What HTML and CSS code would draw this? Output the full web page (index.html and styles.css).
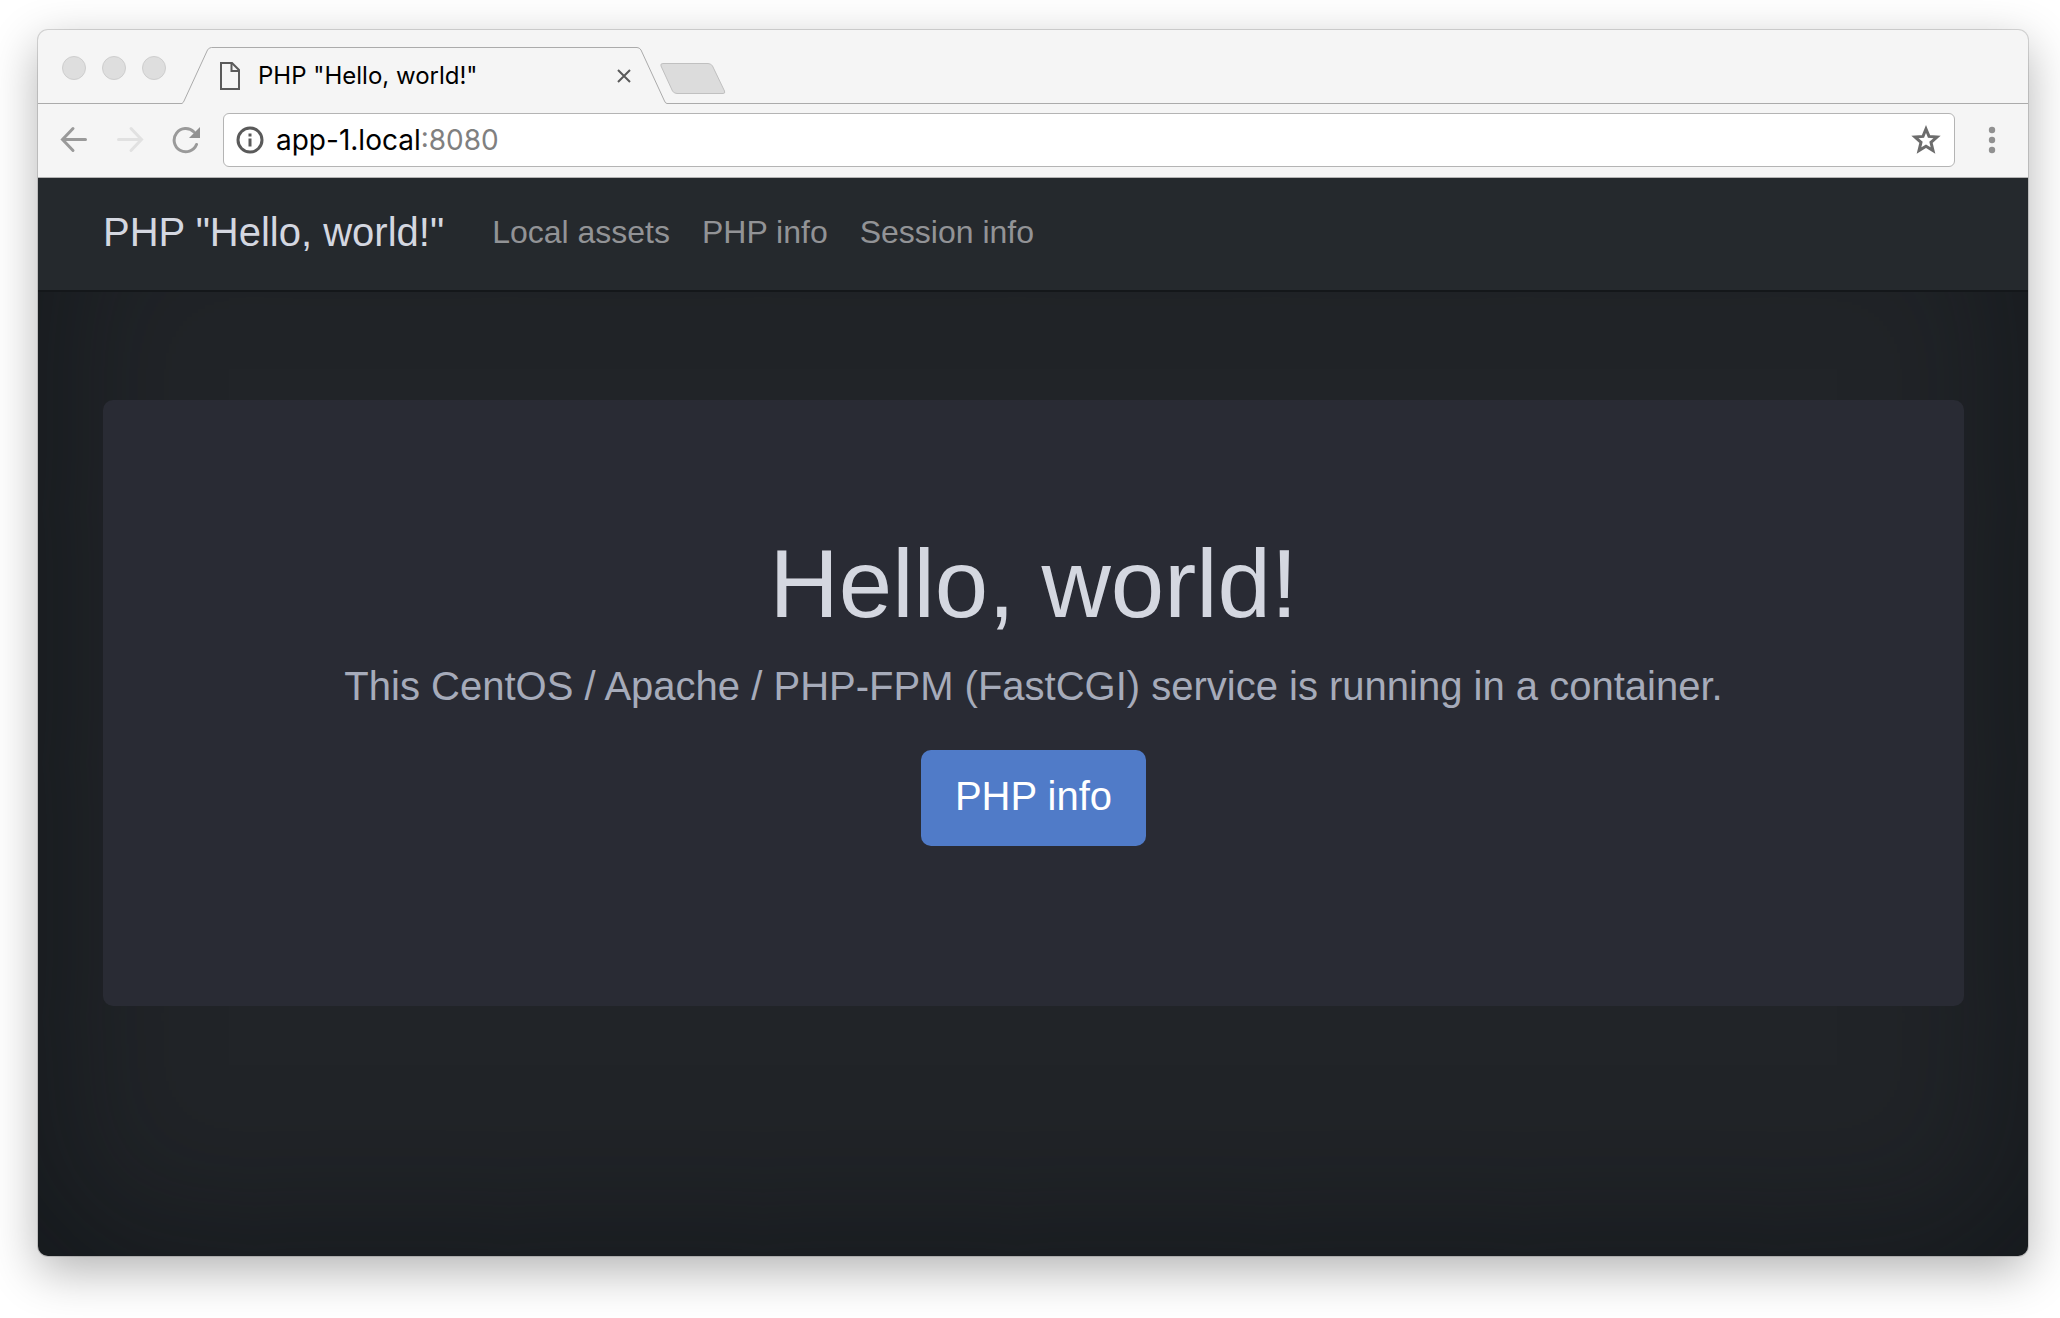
FILE: index.html
```html
<!DOCTYPE html>
<html lang="en">
<head>
  <meta charset="utf-8">
  <title>PHP "Hello, world!"</title>
  <link rel="stylesheet" href="styles.css">
</head>
<body>
  <div class="window">
    <header class="tab-strip">
      <div class="lights"><span class="light"></span><span class="light"></span><span class="light"></span></div>
      <div class="tab">
        <svg class="tab-shape" viewBox="0 0 485 57" aria-hidden="true"><path d="M0 56.5C1 56 1.500 55 2 54L25.500 3Q27 .5 29.500 .5H455Q457.500 .5 459 3L482.500 54Q483.500 56.500 485 56.500"/></svg>
        <svg class="doc-icon" viewBox="0 0 20 28" aria-hidden="true"><path d="M1 1H12L19 8V27H1Z"/><path d="M11.500 1V9H19"/></svg>
        <span class="tab-title">PHP "Hello, world!"</span>
        <button class="tab-close" aria-label="Close tab"><svg viewBox="0 0 14 14"><path d="M1 1L13 13M13 1L1 13"/></svg></button>
      </div>
      <div class="strip-rest">
        <button class="new-tab" aria-label="New tab"><svg viewBox="0 0 66 32"><path d="M3 .5H48Q51 .5 52.500 3L64.500 28Q65.500 30.500 63 30.500H17Q14 30.500 12.500 28L1 3Q0 .5 3 .5Z"/></svg></button>
      </div>
    </header>

    <div class="toolbar">
      <div class="toolbar-nav">
        <button class="tool" aria-label="Back"><svg viewBox="0 0 28 28"><path d="M25.500 13.500H3M13 2.500L2.500 13.500L13 24.500"/></svg></button>
        <button class="tool tool-off" aria-label="Forward"><svg viewBox="0 0 28 28"><path d="M2.500 13.500H25M15 2.500L25.500 13.500L15 24.500"/></svg></button>
        <button class="tool" aria-label="Reload"><svg viewBox="0 0 28 28"><path d="M24.500 18.500A11.600 11.600 0 1 1 22 6"/><path class="solid" d="M28 1V12H17Z"/></svg></button>
      </div>
      <div class="omnibox">
        <svg class="info-icon" viewBox="0 0 28 28" aria-hidden="true"><circle cx="14" cy="14" r="12"/><path d="M14 7.500V10.500M14 12.500V20.500"/></svg>
        <label class="url"><input class="url-host" type="text" value="app-1.local" aria-label="Address"><span class="url-port">:8080</span></label>
        <button class="star" aria-label="Bookmark"><svg viewBox="0 0 30 30"><path d="M15 4L18 11.400L26 12L20 17.300L22 25.600L15 21.200L8 25.600L10 17.300L4 12L12 11.400Z"/></svg></button>
      </div>
      <button class="tool" aria-label="Menu"><svg viewBox="0 0 28 28"><g class="solid"><circle cx="14" cy="4" r="3.200"/><circle cx="14" cy="14" r="3.200"/><circle cx="14" cy="24" r="3.200"/></g></svg></button>
    </div>

    <div class="page">
      <nav class="navbar">
        <a class="brand" href="#">PHP "Hello, world!"</a>
        <a class="nav-link" href="#">Local assets</a>
        <a class="nav-link" href="#">PHP info</a>
        <a class="nav-link" href="#">Session info</a>
      </nav>
      <main class="content">
        <section class="hero">
          <h1 class="hero-title">Hello, world!</h1>
          <p class="hero-lead">This CentOS / Apache / PHP-FPM (FastCGI) service is running in a container.</p>
          <a class="hero-button" href="#">PHP info</a>
        </section>
      </main>
    </div>
  </div>
</body>
</html>
```
FILE: styles.css
```css
* {
  box-sizing: border-box;
}

body {
  display: flex;
  flex-direction: column;
  min-height: 100vh;
  margin: 0;
  padding: 30px 32px 62px 38px;
  background: #fff;
  font-family: "Liberation Sans", Arial, sans-serif;
}

button {
  display: block;
  margin: 0;
  padding: 0;
  border: 0;
  background: none;
}

svg {
  display: block;
  width: 100%;
  height: 100%;
  fill: none;
}

a {
  text-decoration: none;
}

.window {
  display: flex;
  flex: 1;
  flex-direction: column;
  border-radius: 10px;
  background: #f5f5f5;
  box-shadow: 0 0 0 1px rgba(0, 0, 0, 0.14), 0 15px 48px rgba(0, 0, 0, 0.3);
}

/* Tab strip */

.tab-strip {
  display: flex;
  align-items: flex-end;
  height: 74px;
}

.lights {
  display: flex;
  gap: 16px;
  width: 144px;
  height: 74px;
  padding: 26px 0 0 24px;
  border-bottom: 1px solid #ababab;
}

.light {
  width: 24px;
  height: 24px;
  border: 1px solid #cecece;
  border-radius: 50%;
  background: #dedede;
}

.tab {
  position: relative;
  display: flex;
  align-items: center;
  width: 485px;
  height: 57px;
  padding: 0 36px 0 38px;
}

.tab-shape {
  position: absolute;
  inset: 0;
  stroke: #ababab;
}

.doc-icon {
  width: 20px;
  height: 28px;
  stroke: #5a5a5a;
  stroke-width: 2;
}

.tab-title {
  flex: 1;
  margin-left: 18px;
  color: #000;
  font-family: Inter, sans-serif;
  font-size: 24px;
  line-height: 32px;
}

.tab-close {
  position: relative;
  width: 14px;
  height: 14px;
  stroke: #5a5a5a;
  stroke-width: 2;
}

.strip-rest {
  flex: 1;
  height: 74px;
  padding-top: 33px;
  border-bottom: 1px solid #ababab;
}

.new-tab {
  position: relative;
  width: 66px;
  height: 32px;
  margin-left: -7px;
}

.new-tab path {
  fill: #dcdcdc;
  stroke: #c0c0c0;
}

/* Toolbar */

.toolbar {
  display: flex;
  align-items: center;
  gap: 23px;
  padding: 9px 22px 10px;
  border-bottom: 1px solid #b4b4b4;
}

.toolbar-nav {
  display: flex;
  gap: 28px;
}

.tool {
  width: 28px;
  height: 28px;
  stroke: #9a9a9a;
  stroke-width: 3;
  stroke-linecap: round;
}

.tool-off {
  stroke: #e1e1e1;
}

.solid {
  fill: #919191;
  stroke: none;
}

.omnibox {
  display: flex;
  flex: 1;
  align-items: center;
  height: 54px;
  padding: 0 13px 0 12px;
  border: 1px solid #b4b4b4;
  border-radius: 6px;
  background: #fff;
}

.info-icon {
  width: 28px;
  height: 28px;
  stroke: #5a5a5a;
  stroke-width: 3;
}

.url {
  display: flex;
  flex: 1;
  align-items: center;
  margin-left: 12px;
  font-family: Inter, sans-serif;
  font-size: 28px;
  line-height: 36px;
}

.url-host {
  field-sizing: content;
  padding: 0;
  border: 0;
  outline: 0;
  background: none;
  color: #000;
  font: inherit;
}

.url-port {
  color: #808080;
}

.star {
  width: 30px;
  height: 30px;
  stroke: #6c6c6c;
  stroke-width: 3;
}

/* Page */

.page {
  display: flex;
  flex: 1;
  flex-direction: column;
  border-radius: 0 0 10px 10px;
  background: #212428;
  box-shadow: inset 0 0 160px rgba(8, 14, 16, 0.6);
}

.navbar {
  display: flex;
  align-items: center;
  gap: 32px;
  padding: 24px 65px 28px;
  border-bottom: 2px solid #14171a;
  background: #25292d;
}

.brand {
  margin-right: 16px;
  color: #d4d7e0;
  font-size: 40px;
  line-height: 60px;
}

.nav-link {
  color: #929396;
  font-size: 32px;
  line-height: 48px;
}

.content {
  padding: 108px 64px 64px 65px;
}

.hero {
  padding: 128px 64px 160px;
  border-radius: 10px;
  background: #292b34;
  text-align: center;
}

.hero-title {
  margin: 0 0 16px;
  color: #d4d7e0;
  font-size: 96px;
  font-weight: 400;
  line-height: 112px;
}

.hero-lead {
  margin: 0 0 34px;
  color: #a6abba;
  font-size: 40px;
  line-height: 60px;
}

.hero-button {
  display: block;
  width: fit-content;
  margin: 0 auto;
  padding: 16px 34px 20px;
  border-radius: 10px;
  background: #507bc8;
  color: #fff;
  font-size: 40px;
  line-height: 60px;
}
```
